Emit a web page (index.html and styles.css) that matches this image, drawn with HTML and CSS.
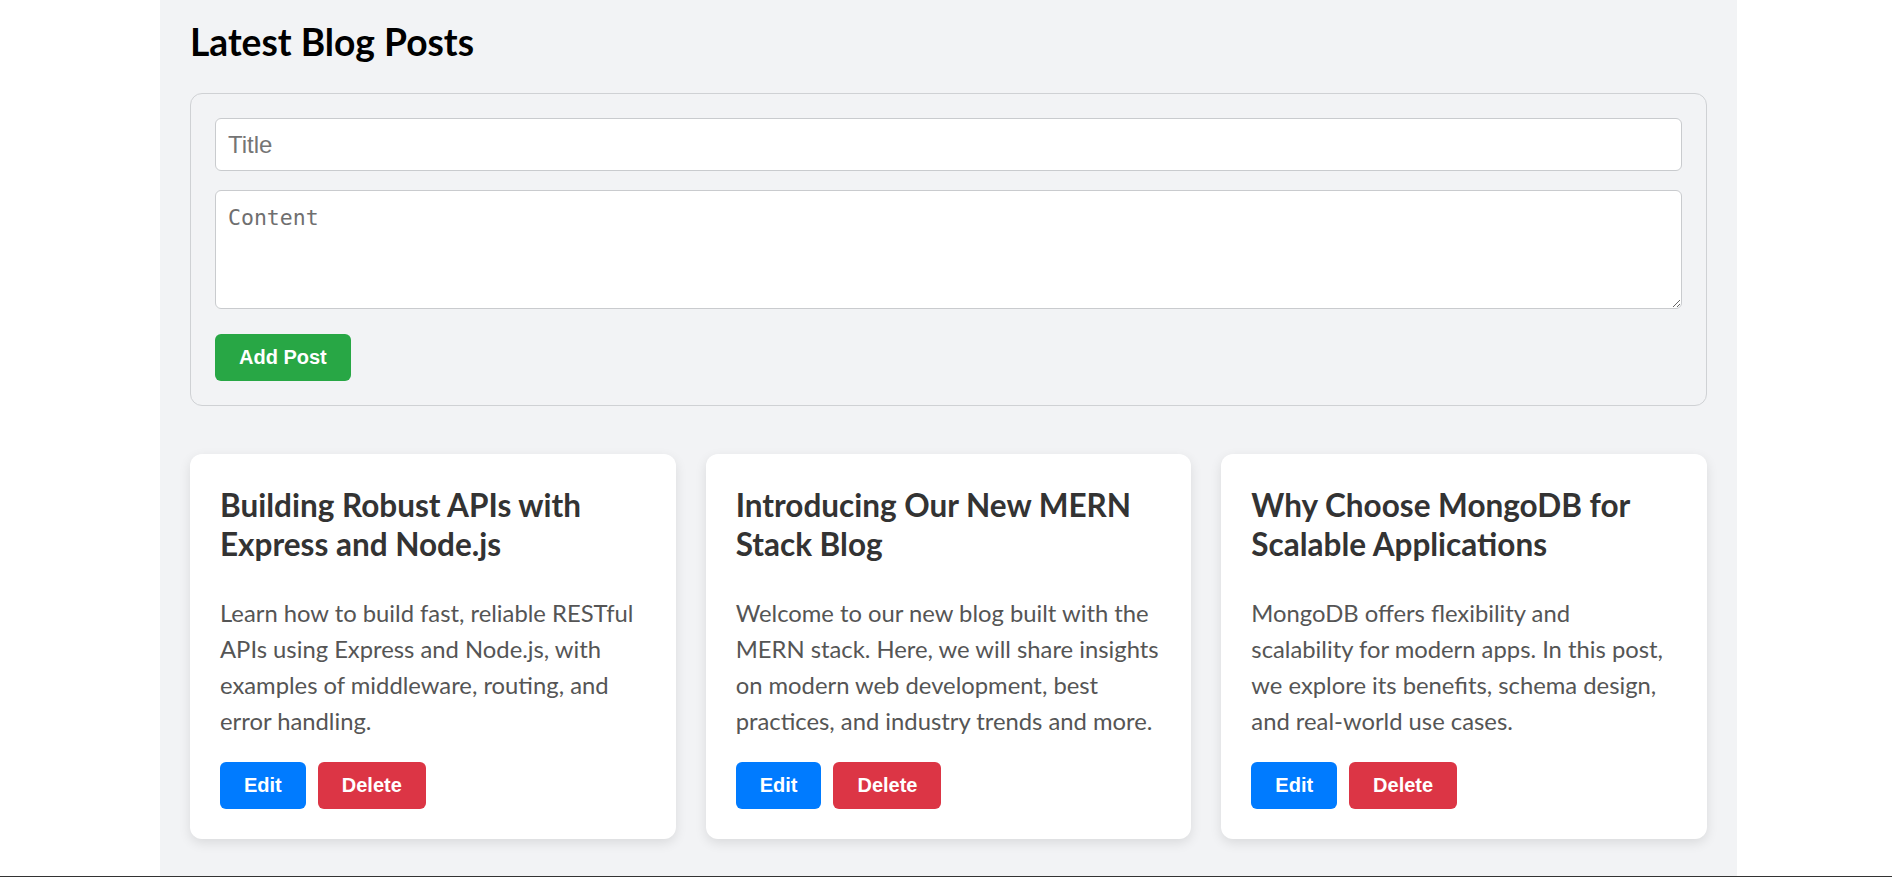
FILE: index.html
```html
<!DOCTYPE html>
<html lang="en">
<head>
<meta charset="utf-8">
<title>Latest Blog Posts</title>
<link rel="stylesheet" href="styles.css">
</head>
<body>
<main class="page">
  <h2 class="page-title">Latest Blog Posts</h2>

  <form class="post-form">
    <input class="field field-title" type="text" placeholder="Title">
    <textarea class="field field-content" placeholder="Content"></textarea>
    <div class="form-actions">
      <button type="button" class="btn btn-add">Add Post</button>
    </div>
  </form>

  <section class="posts">
    <article class="card">
      <h3 class="card-title">Building Robust APIs with Express and Node.js</h3>
      <p class="card-text">Learn how to build fast, reliable RESTful APIs using Express and Node.js, with examples of middleware, routing, and error handling.</p>
      <div class="card-actions">
        <button type="button" class="btn btn-edit">Edit</button>
        <button type="button" class="btn btn-delete">Delete</button>
      </div>
    </article>
    <article class="card">
      <h3 class="card-title">Introducing Our New MERN Stack Blog</h3>
      <p class="card-text">Welcome to our new blog built with the MERN stack. Here, we will share insights on modern web development, best practices, and industry trends and more.</p>
      <div class="card-actions">
        <button type="button" class="btn btn-edit">Edit</button>
        <button type="button" class="btn btn-delete">Delete</button>
      </div>
    </article>
    <article class="card">
      <h3 class="card-title">Why Choose MongoDB for Scalable Applications</h3>
      <p class="card-text">MongoDB offers flexibility and scalability for modern apps. In this post, we explore its benefits, schema design, and real-world use cases.</p>
      <div class="card-actions">
        <button type="button" class="btn btn-edit">Edit</button>
        <button type="button" class="btn btn-delete">Delete</button>
      </div>
    </article>
  </section>
</main>
<footer class="site-footer"></footer>
</body>
</html>
```
FILE: styles.css
```css
html, body {
  margin: 0;
  padding: 0;
  background: #ffffff;
}

body {
  font-family: "Lato", "Noto Sans", sans-serif;
}

.page {
  box-sizing: border-box;
  width: 1577px;
  margin-left: 160px;
  padding: 20px 30px 37px;
  background: #f2f3f5;
}

.page-title {
  margin: 0 0 29px;
  font-family: "Lato", sans-serif;
  font-weight: 700;
  font-size: 37.2px;
  line-height: 44px;
  color: #000000;
}

.post-form {
  display: flex;
  flex-direction: column;
  align-items: stretch;
  padding: 24px;
  border: 1px solid #cfd1d4;
  border-radius: 12px;
  margin: 0 0 48px;
}

.field {
  box-sizing: border-box;
  display: block;
  width: 100%;
  border: 1px solid #c9cbce;
  border-radius: 6px;
  background: #ffffff;
  color: #222;
  outline: none;
}

.field::placeholder {
  color: #757575;
}

.field-title {
  height: 53px;
  padding: 0 12px;
  margin-bottom: 19px;
  font-family: "Liberation Sans", Arial, sans-serif;
  font-size: 24px;
}

.field-content {
  height: 119px;
  padding: 14px 12px 12px;
  margin-bottom: 25px;
  font-family: "DejaVu Sans Mono", "Liberation Mono", monospace;
  font-size: 21.5px;
  resize: both;
}

.field-content::placeholder {
  color: #6f6f6f;
}

.form-actions {
  display: flex;
}

.btn {
  box-sizing: border-box;
  height: 47px;
  padding: 0 24px;
  border: none;
  border-radius: 6px;
  color: #ffffff;
  font-family: "Liberation Sans", Arial, sans-serif;
  font-weight: 700;
  font-size: 20px;
  cursor: pointer;
}

.btn-add { background: #28a745; }
.btn-edit { background: #007bff; }
.btn-delete { background: #dc3545; }

.posts {
  display: grid;
  grid-template-columns: repeat(3, 1fr);
  gap: 30px;
}

.card {
  padding: 30px;
  background: #ffffff;
  border-radius: 12px;
  box-shadow: 0 4px 12px rgba(0, 0, 0, 0.1);
}

.card-title {
  margin: 0 0 31px;
  padding-top: 2px;
  font-family: "Lato", sans-serif;
  font-weight: 700;
  font-size: 31.5px;
  line-height: 39px;
  color: #333333;
}

.card-text {
  margin: 0 0 23px;
  font-family: "Lato", sans-serif;
  font-size: 23.8px;
  line-height: 36px;
  color: #555555;
}

.card-actions {
  display: flex;
  gap: 12px;
}

.site-footer {
  height: 1px;
  background: #333333;
}
```
